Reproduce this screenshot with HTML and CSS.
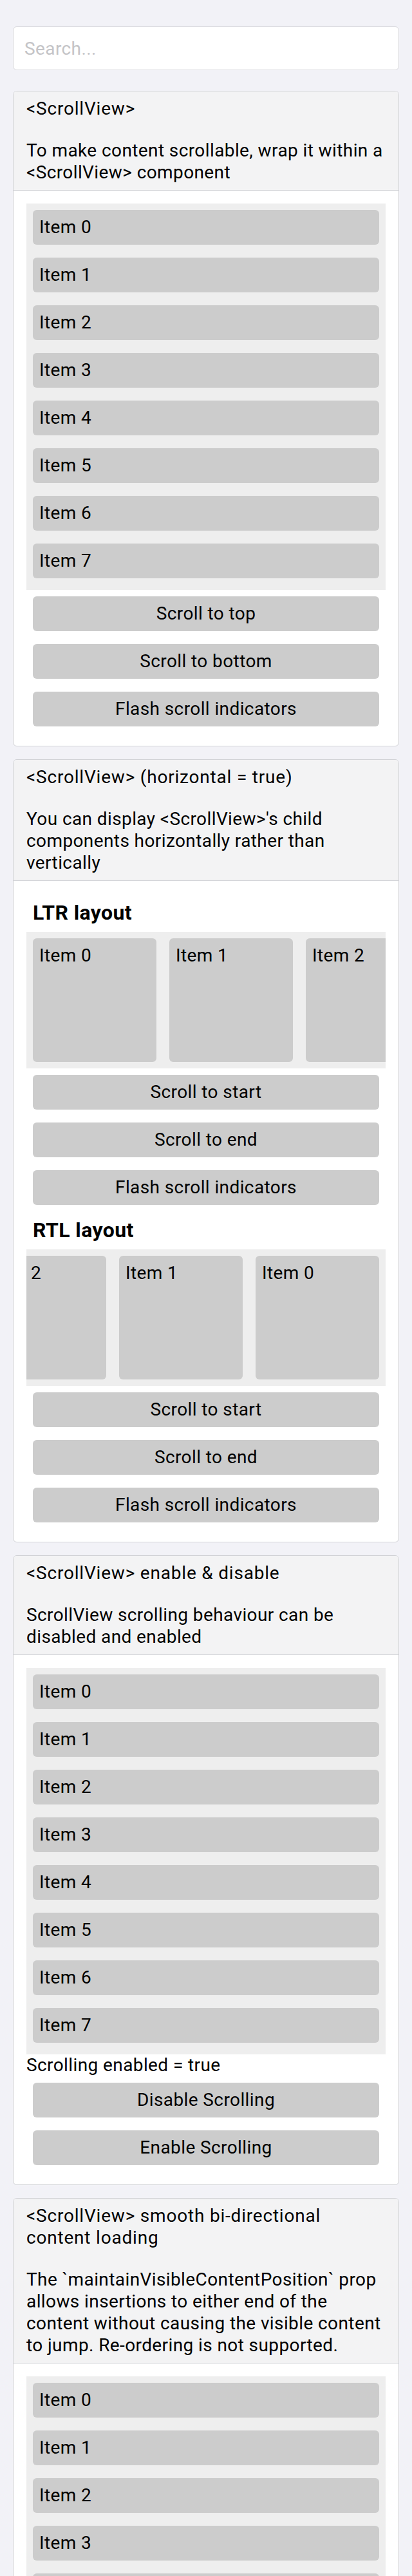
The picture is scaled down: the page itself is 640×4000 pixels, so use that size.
FILE: index.html
```html
<!DOCTYPE html>
<html>
<head>
<meta charset="utf-8">
<link rel="stylesheet" href="styles.css">
</head>
<body>
<div class="page">
  <div class="search-row">
    <input class="search" type="text" placeholder="Search...">
  </div>

  <section class="card">
    <header class="card-head">
      <div class="title">&lt;ScrollView&gt;</div>
      <div class="desc">To make content scrollable, wrap it within a &lt;ScrollView&gt; component</div>
    </header>
    <div class="card-body">
      <div class="vscroll">
        <div class="item">Item 0</div>
        <div class="item">Item 1</div>
        <div class="item">Item 2</div>
        <div class="item">Item 3</div>
        <div class="item">Item 4</div>
        <div class="item">Item 5</div>
        <div class="item">Item 6</div>
        <div class="item">Item 7</div>
        <div class="item">Item 8</div>
        <div class="item">Item 9</div>
      </div>
      <div class="btn">Scroll to top</div>
      <div class="btn">Scroll to bottom</div>
      <div class="btn">Flash scroll indicators</div>
    </div>
  </section>

  <section class="card">
    <header class="card-head">
      <div class="title">&lt;ScrollView&gt; (horizontal = true)</div>
      <div class="desc">You can display &lt;ScrollView&gt;'s child components horizontally rather than vertically</div>
    </header>
    <div class="card-body">
      <div class="label">LTR layout</div>
      <div class="hscroll">
        <div class="hitem">Item 0</div>
        <div class="hitem">Item 1</div>
        <div class="hitem">Item 2</div>
        <div class="hitem">Item 3</div>
      </div>
      <div class="btn">Scroll to start</div>
      <div class="btn">Scroll to end</div>
      <div class="btn">Flash scroll indicators</div>
      <div class="label">RTL layout</div>
      <div class="hscroll rtl">
        <div class="hitem">Item 0</div>
        <div class="hitem">Item 1</div>
        <div class="hitem">Item 2</div>
        <div class="hitem">Item 3</div>
      </div>
      <div class="btn">Scroll to start</div>
      <div class="btn">Scroll to end</div>
      <div class="btn">Flash scroll indicators</div>
    </div>
  </section>

  <section class="card">
    <header class="card-head">
      <div class="title">&lt;ScrollView&gt; enable &amp; disable</div>
      <div class="desc">ScrollView scrolling behaviour can be disabled and enabled</div>
    </header>
    <div class="card-body">
      <div class="vscroll">
        <div class="item">Item 0</div>
        <div class="item">Item 1</div>
        <div class="item">Item 2</div>
        <div class="item">Item 3</div>
        <div class="item">Item 4</div>
        <div class="item">Item 5</div>
        <div class="item">Item 6</div>
        <div class="item">Item 7</div>
        <div class="item">Item 8</div>
        <div class="item">Item 9</div>
      </div>
      <div class="status">Scrolling enabled = true</div>
      <div class="btn">Disable Scrolling</div>
      <div class="btn">Enable Scrolling</div>
    </div>
  </section>

  <section class="card">
    <header class="card-head">
      <div class="title">&lt;ScrollView&gt; smooth bi-directional content loading</div>
      <div class="desc">The `maintainVisibleContentPosition` prop allows insertions to either end of the content without causing the visible content to jump. Re-ordering is not supported.</div>
    </header>
    <div class="card-body">
      <div class="vscroll">
        <div class="item">Item 0</div>
        <div class="item">Item 1</div>
        <div class="item">Item 2</div>
        <div class="item">Item 3</div>
        <div class="item">Item 4</div>
        <div class="item">Item 5</div>
        <div class="item">Item 6</div>
        <div class="item">Item 7</div>
      </div>
      <div class="btn">Add to top</div>
      <div class="btn">Add to end</div>
    </div>
  </section>
</div>
</body>
</html>
```

FILE: styles.css
```css
html, body {
  margin: 0;
  padding: 0;
  background: #f2f2f7;
}

body {
  font-family: Roboto, "Liberation Sans", sans-serif;
  font-size: 28px;
  line-height: 34px;
  letter-spacing: 0.4px;
  color: #000;
}

.page {
  display: flex;
  flex-direction: column;
  padding-top: 41px;
}

.search-row {
  padding: 0 20px;
  margin-bottom: 32px;
}

.search {
  display: block;
  box-sizing: border-box;
  width: 100%;
  height: 68px;
  margin: 0;
  padding: 0 0 0 17px;
  border: 1px solid #d8d8dc;
  border-radius: 6px;
  background: #fff;
  font-family: Roboto, "Liberation Sans", sans-serif;
  font-size: 28px;
  letter-spacing: 0.4px;
  color: #000;
  outline: none;
}

.search::placeholder {
  color: #c4c4c7;
}

.card {
  margin: 0 20px 20px;
  border: 1px solid #d0d1d5;
  border-radius: 6px;
  background: #fff;
  overflow: hidden;
}

.card-head {
  background: #f3f3f4;
  border-bottom: 1px solid #d0d1d5;
  padding: 10px 20px;
}

.title {
  margin-bottom: 31px;
  letter-spacing: 0.8px;
}

.card-body {
  padding: 20px;
  display: flex;
  flex-direction: column;
}

.vscroll {
  height: 600px;
  background: #eeeeee;
  overflow: hidden;
  display: flex;
  flex-direction: column;
}

.item {
  flex-shrink: 0;
  margin: 10px;
  padding: 10px;
  background: #cccccc;
  border-radius: 6px;
}

.btn {
  margin: 10px;
  padding: 10px;
  background: #cccccc;
  border-radius: 6px;
  text-align: center;
}

.label {
  margin: 10px;
  font-size: 32px;
  line-height: 39px;
  font-weight: bold;
}

.hscroll {
  height: 212px;
  background: #eeeeee;
  overflow: hidden;
  display: flex;
  flex-direction: row;
}

.hscroll.rtl {
  flex-direction: row-reverse;
}

.hitem {
  flex-shrink: 0;
  box-sizing: border-box;
  width: 192px;
  height: 192px;
  margin: 10px;
  padding: 10px;
  background: #cccccc;
  border-radius: 6px;
}

.status {
  line-height: 34px;
}
```
